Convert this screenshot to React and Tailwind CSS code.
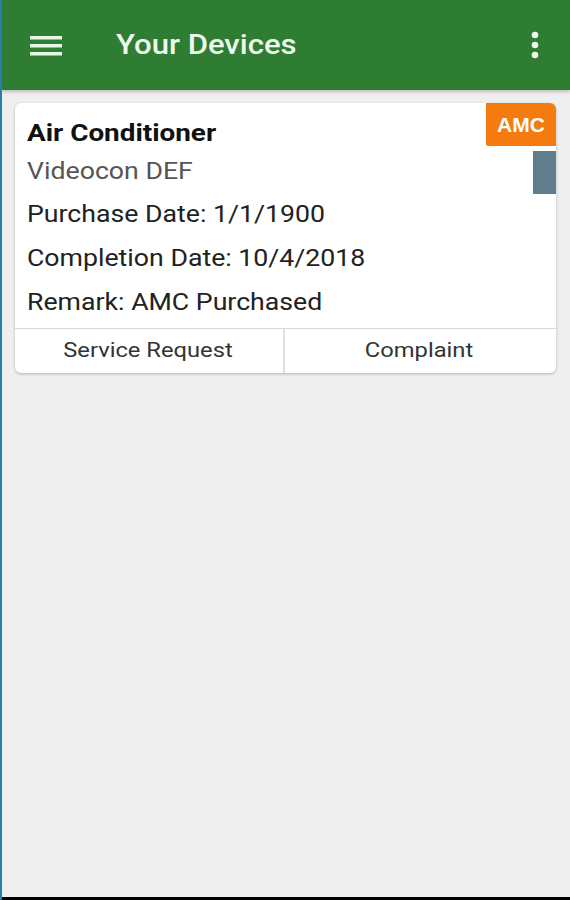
import React from "react";

function S({ children, c = "origin-left scale-x-[1.16]" }) {
  return <span className={"inline-block whitespace-nowrap " + c}>{children}</span>;
}

export default function App() {
  return (
    <div className="w-[570px] h-[900px] flex flex-col bg-[#efefef] border-l-2 border-[#2a7fa8] overflow-hidden" style={{ fontFamily: "Roboto, 'Noto Sans', sans-serif" }}>
      <div className="h-[90px] shrink-0 bg-[#2e7d32] flex items-center shadow-[0_2px_3px_rgba(0,0,0,0.2)] z-10">
        <svg width="32" height="24" viewBox="0 0 32 24" className="ml-[28px]">
          <rect x="0" y="3" width="32" height="3.5" fill="#e8f5e9" />
          <rect x="0" y="11" width="32" height="3.5" fill="#e8f5e9" />
          <rect x="0" y="19" width="32" height="3.5" fill="#e8f5e9" />
        </svg>
        <div className="ml-[54px] text-[28px] font-medium text-[#eef8ee] pb-[1px]">
          <S c="origin-left scale-x-[1.11]">Your Devices</S>
        </div>
        <div className="flex-1" />
        <svg width="8" height="28" viewBox="0 0 8 28" className="mr-[31px]">
          <circle cx="4" cy="4" r="3.3" fill="#eef8ee" />
          <circle cx="4" cy="14" r="3.3" fill="#eef8ee" />
          <circle cx="4" cy="24" r="3.3" fill="#eef8ee" />
        </svg>
      </div>
      <div className="flex-1 px-[13px] pt-[13px]">
        <div className="relative bg-white rounded-[6px] shadow-[0_1px_3px_rgba(0,0,0,0.25)] w-[541px]">
          <div className="absolute right-0 top-0 w-[70px] h-[43px] bg-[#f47b0f] rounded-tr-[6px] rounded-bl-[2px] flex items-center justify-center text-white font-bold text-[21px]" style={{ fontFamily: "'Liberation Sans', Arial, sans-serif" }}>AMC</div>
          <div className="absolute right-0 top-[48px] w-[23px] h-[43px] bg-[#607d8b]" />
          <div className="pl-[12px] pt-[16px] pb-[3px] text-[#222] text-[23px]">
            <div className="font-bold text-[#111] text-[24px] leading-[28px] pb-[4px]"><S>Air Conditioner</S></div>
            <div className="text-[#555] leading-[42px]"><S>Videocon DEF</S></div>
            <div className="leading-[44px]"><S>Purchase Date: 1/1/1900</S></div>
            <div className="leading-[44px]"><S>Completion Date: 10/4/2018</S></div>
            <div className="leading-[44px]"><S>Remark: AMC Purchased</S></div>
          </div>
          <div className="flex border-t border-[#d8d8d8] h-[45px] text-[21px] text-[#333]">
            <div className="w-[270px] flex items-center justify-center border-r-2 border-[#e0e0e0] pr-[3px]"><S c="origin-center scale-x-[1.13]">Service Request</S></div>
            <div className="flex-1 flex items-center justify-center pr-[4px]"><S c="origin-center scale-x-[1.13]">Complaint</S></div>
          </div>
        </div>
      </div>
      <div className="h-[3px] bg-black shrink-0" />
    </div>
  );
}
